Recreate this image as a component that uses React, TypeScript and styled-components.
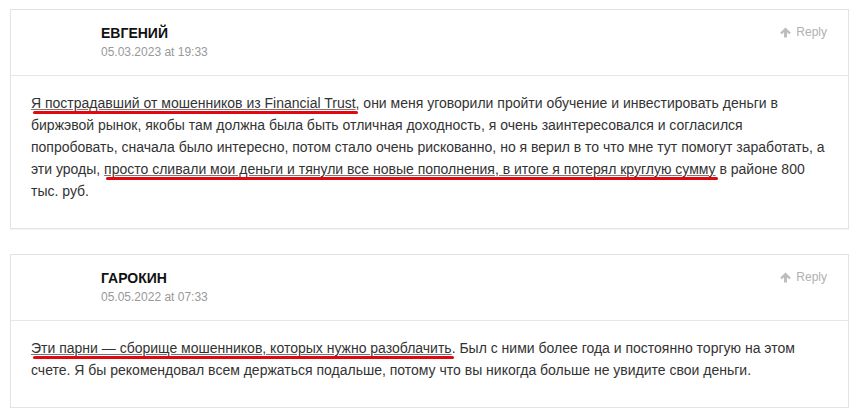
import React from "react";
import styled, { createGlobalStyle } from "styled-components";

const GlobalStyle = createGlobalStyle`
	body {
		margin: 0;
		background: #fff;
		font-family: "Liberation Sans", Arial, sans-serif;
	}
`;

const Page = styled.div`
	display: flex;
	flex-direction: column;
	gap: 25px;
	padding: 9px 8px 0 10px;
`;

const Card = styled.article`
	border: 1px solid #e3e3e3;
	box-shadow: 0 1px 1px rgba(0, 0, 0, 0.04);
	background: #fff;
`;

const Header = styled.header`
	display: flex;
	justify-content: space-between;
	height: 65px;
	padding: 0 21px 0 90px;
	border-bottom: 1px solid #e6e6e6;
`;

const Meta = styled.div`
	display: flex;
	flex-direction: column;
	padding-top: 13px;
`;

const Name = styled.div`
	font-size: 14px;
	font-weight: bold;
	color: #111;
	text-transform: uppercase;
	line-height: 20px;
`;

const Date = styled.div`
	font-size: 12px;
	color: #999;
	line-height: 20px;
	margin-top: -1px;
`;

const ReplyButton = styled.a`
	display: flex;
	align-items: center;
	gap: 5px;
	align-self: flex-start;
	margin-top: 15px;
	font-size: 12px;
	color: #b0b0b0;
	cursor: pointer;

	svg {
		width: 11px;
		height: 11px;
		fill: #bdbdbd;
	}
`;

const Body = styled.div`
	padding: 16px 20px 26px 20px;
	font-size: 14px;
	line-height: 22px;
	color: #333;
`;

const Marked = styled.span`
	position: relative;
	text-decoration: underline;
	text-decoration-color: #777;
	text-underline-offset: 1px;

	&::after {
		content: "";
		position: absolute;
		left: 2px;
		right: -2px;
		bottom: -3px;
		height: 3px;
		border-radius: 2px;
		background: #e3070f;
	}
`;

const ArrowUp = () => (
	<svg viewBox="0 0 12 12" aria-hidden="true">
		<path d="M6 0.5 L11.8 6.3 L10 8 L7.6 5.6 V11.5 H4.4 V5.6 L2 8 L0.2 6.3 Z" />
	</svg>
);

interface CommentProps {
	name: string;
	date: string;
	children: React.ReactNode;
}

const Comment = ({ name, date, children }: CommentProps) => (
	<Card>
		<Header>
			<Meta>
				<Name>{name}</Name>
				<Date>{date}</Date>
			</Meta>
			<ReplyButton>
				<ArrowUp />
				Reply
			</ReplyButton>
		</Header>
		<Body>{children}</Body>
	</Card>
);

const App: React.FC = () => {
	return (
		<>
			<GlobalStyle />
			<Page>
				<Comment name="Евгений" date="05.03.2023 at 19:33">
					<Marked>Я пострадавший от мошенников из Financial Trust</Marked>, они меня
					уговорили пройти обучение и инвестировать деньги в биржэвой рынок, якобы
					там должна была быть отличная доходность, я очень заинтересовался и
					согласился попробовать, сначала было интересно, потом стало очень
					рискованно, но я верил в то что мне тут помогут заработать, а эти уроды,{" "}
					<Marked>
						просто сливали мои деньги и тянули все новые пополнения, в итоге я
						потерял круглую сумму
					</Marked>{" "}
					в районе 800 тыс. руб.
				</Comment>
				<Comment name="Гарокин" date="05.05.2022 at 07:33">
					<Marked>Эти парни — сборище мошенников, которых нужно разоблачить</Marked>.
					Был с ними более года и постоянно торгую на этом счете. Я бы рекомендовал
					всем держаться подальше, потому что вы никогда больше не увидите свои
					деньги.
				</Comment>
			</Page>
		</>
	);
};

export default App;
